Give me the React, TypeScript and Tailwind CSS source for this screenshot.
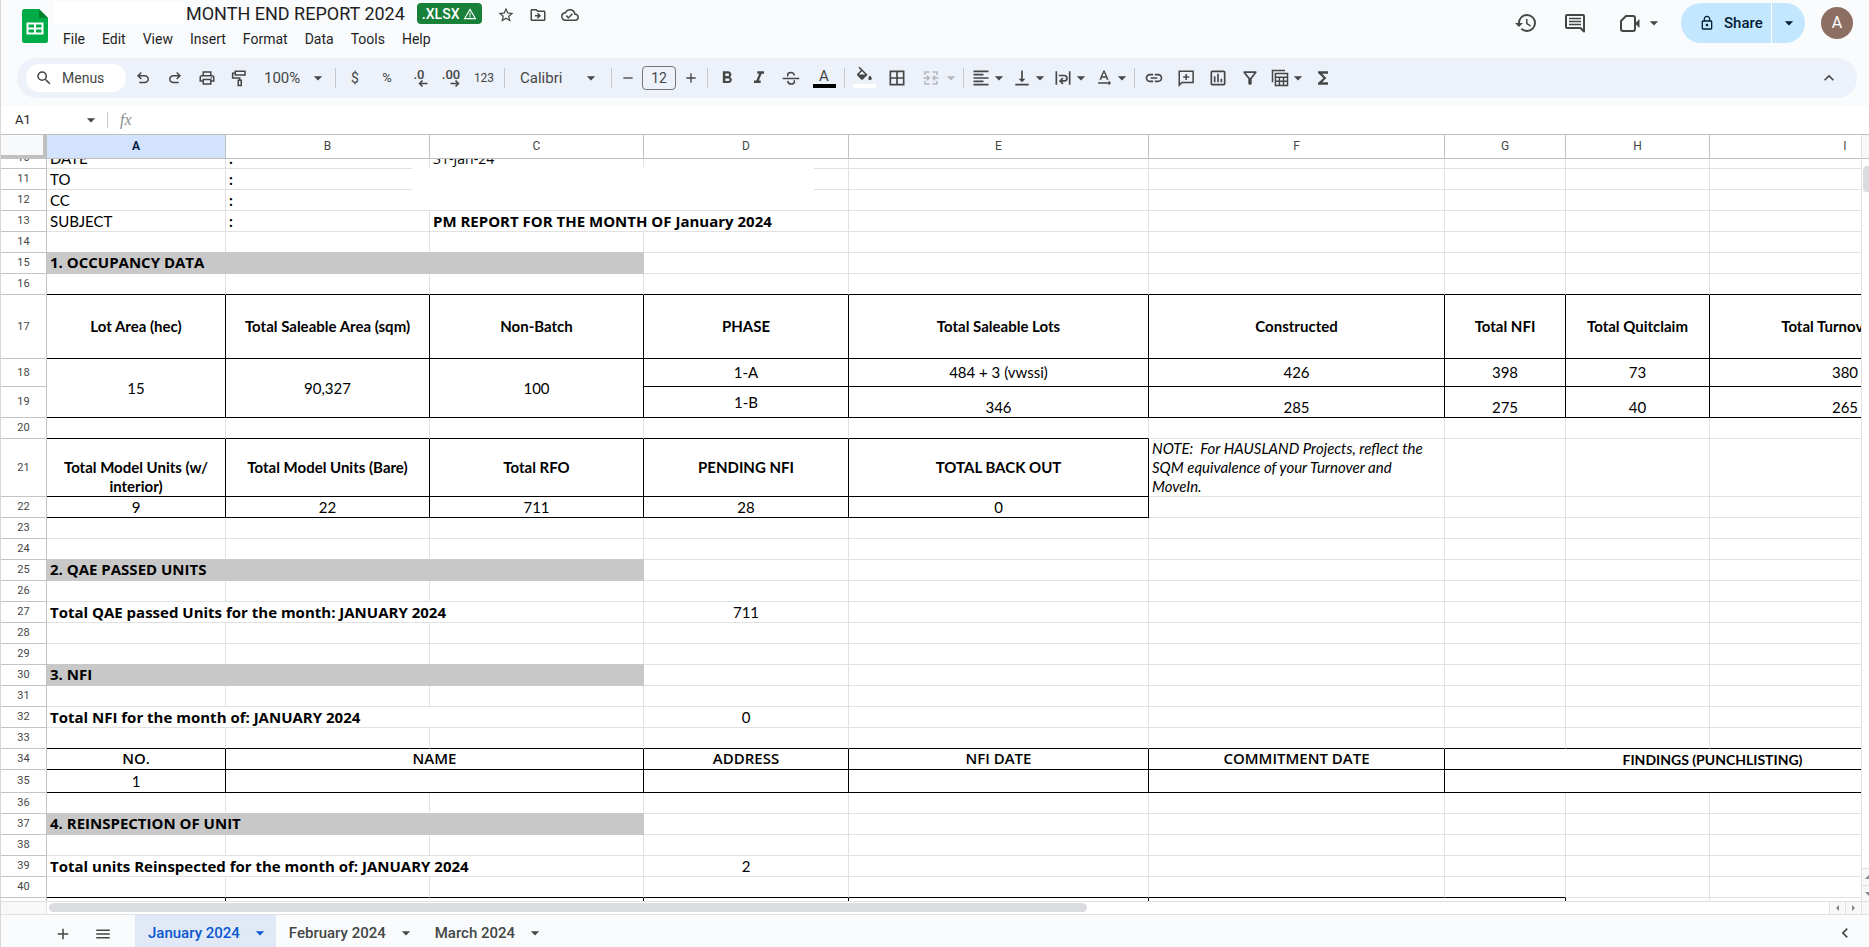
import type { ReactNode } from 'react';
import clsx from 'clsx';
import {
  MdAdd,
  MdArrowDropDown,
  MdBorderAll,
  MdChevronLeft,
  MdFormatAlignLeft,
  MdFormatBold,
  MdFormatItalic,
  MdFunctions,
  MdHistory,
  MdKeyboardArrowUp,
  MdLink,
  MdLockOutline,
  MdMenu,
  MdOutlineCloudDone,
  MdOutlineDriveFileMove,
  MdOutlineFilterAlt,
  MdOutlineInsertChart,
  MdOutlinePrint,
  MdRemove,
  MdSearch,
  MdStarBorder,
  MdTextRotationNone,
  MdVerticalAlignBottom,
  MdWarningAmber,
} from 'react-icons/md';

const menus = ['File', 'Edit', 'View', 'Insert', 'Format', 'Data', 'Tools', 'Help'];

const columns = [
  { id: 'A', width: 'w-[179px]' },
  { id: 'B', width: 'w-[204px]' },
  { id: 'C', width: 'w-[214px]' },
  { id: 'D', width: 'w-[205px]' },
  { id: 'E', width: 'w-[300px]' },
  { id: 'F', width: 'w-[296px]' },
  { id: 'G', width: 'w-[121px]' },
  { id: 'H', width: 'w-[144px]' },
  { id: 'I', width: 'w-[271px]' },
];

type Cell = {
  text?: string;
  span?: number;
  rows?: number;
  style?: string;
};

type Row = {
  n: number;
  height?: string;
  cells?: Record<number, Cell>;
  // how many columns, from A on, get a black right / bottom border
  inkRight?: number;
  inkBottom?: number;
  // columns covered by a merge that started in the row above
  covered?: number;
  greyBottom?: boolean;
};

const label = 'text-[15px]';
const colon = 'text-[15px] font-bold';
const title = 'font-["Open_Sans"] text-[15px] font-bold';
const head = 'text-[15px] font-bold text-center align-middle';
const value = 'text-[15px] text-center';
const middle = 'text-[15px] text-center align-middle';
const section = 'font-["Open_Sans"] text-[15px] font-bold bg-[#c8c8c8] border-[#c8c8c8]! pb-px';
const centred = 'font-["Open_Sans"] text-[15px] font-semibold text-center pb-px';

const rows: Row[] = [
  {
    n: 10,
    height: 'h-[10px]',
    cells: {
      0: { text: 'DATE', style: label },
      1: { text: ':', style: colon },
      2: { text: '31-Jan-24', style: 'font-["Open_Sans"] text-[14px]' },
    },
  },
  { n: 11, cells: { 0: { text: 'TO', style: label }, 1: { text: ':', style: colon } } },
  { n: 12, cells: { 0: { text: 'CC', style: label }, 1: { text: ':', style: colon } } },
  {
    n: 13,
    cells: {
      0: { text: 'SUBJECT', style: label },
      1: { text: ':', style: colon },
      2: { text: 'PM REPORT FOR THE MONTH OF January 2024', span: 2, style: title },
    },
  },
  { n: 14, greyBottom: true },
  { n: 15, cells: { 0: { text: '1. OCCUPANCY DATA', span: 3, style: section } } },
  { n: 16, inkBottom: 9 },
  {
    n: 17,
    height: 'h-16',
    inkRight: 9,
    inkBottom: 9,
    cells: {
      0: { text: 'Lot Area (hec)', style: head },
      1: { text: 'Total Saleable Area (sqm)', style: head },
      2: { text: 'Non-Batch', style: head },
      3: { text: 'PHASE', style: head },
      4: { text: 'Total Saleable Lots', style: head },
      5: { text: 'Constructed', style: head },
      6: { text: 'Total NFI', style: head },
      7: { text: 'Total Quitclaim', style: head },
      8: { text: 'Total Turnover Unit', style: head },
    },
  },
  {
    n: 18,
    height: 'h-7',
    inkRight: 9,
    inkBottom: 9,
    cells: {
      0: { text: '15', rows: 2, style: middle },
      1: { text: '90,327', rows: 2, style: middle },
      2: { text: '100', rows: 2, style: middle },
      3: { text: '1-A', style: middle },
      4: { text: '484 + 3 (vwssi)', style: middle },
      5: { text: '426', style: middle },
      6: { text: '398', style: middle },
      7: { text: '73', style: middle },
      8: { text: '380', style: middle },
    },
  },
  {
    n: 19,
    height: 'h-[31px]',
    covered: 3,
    inkRight: 9,
    inkBottom: 9,
    cells: {
      3: { text: '1-B', style: middle },
      4: { text: '346', style: value },
      5: { text: '285', style: value },
      6: { text: '275', style: value },
      7: { text: '40', style: value },
      8: { text: '265', style: value },
    },
  },
  { n: 20, inkBottom: 5 },
  {
    n: 21,
    height: 'h-[58px]',
    inkRight: 5,
    inkBottom: 5,
    cells: {
      0: { text: 'Total Model Units (w/ interior)', style: 'text-[15px] font-bold text-center' },
      1: { text: 'Total Model Units (Bare)', style: head },
      2: { text: 'Total RFO', style: head },
      3: { text: 'PENDING NFI', style: head },
      4: { text: 'TOTAL BACK OUT', style: head },
      5: {
        text: 'NOTE:  For HAUSLAND Projects, reflect the SQM equivalence of your Turnover and MoveIn.',
        style: 'text-[15px] italic',
      },
    },
  },
  {
    n: 22,
    inkRight: 5,
    inkBottom: 5,
    cells: {
      0: { text: '9', style: value },
      1: { text: '22', style: value },
      2: { text: '711', style: value },
      3: { text: '28', style: value },
      4: { text: '0', style: value },
    },
  },
  { n: 23 },
  { n: 24, greyBottom: true },
  { n: 25, cells: { 0: { text: '2. QAE PASSED UNITS', span: 3, style: section } } },
  { n: 26 },
  {
    n: 27,
    cells: {
      0: { text: 'Total QAE passed Units for the month: JANUARY 2024', span: 3, style: title },
      3: { text: '711', style: value },
    },
  },
  { n: 28 },
  { n: 29, greyBottom: true },
  { n: 30, cells: { 0: { text: '3. NFI', span: 3, style: section } } },
  { n: 31 },
  {
    n: 32,
    cells: {
      0: { text: 'Total NFI for the month of: JANUARY 2024', span: 3, style: title },
      3: { text: '0', style: value },
    },
  },
  { n: 33, inkBottom: 9 },
  {
    n: 34,
    inkRight: 9,
    inkBottom: 9,
    cells: {
      0: { text: 'NO.', style: centred },
      1: { text: 'NAME', span: 2, style: centred },
      3: { text: 'ADDRESS', style: centred },
      4: { text: 'NFI DATE', style: centred },
      5: { text: 'COMMITMENT DATE', style: centred },
      6: { text: 'FINDINGS (PUNCHLISTING)', span: 3, style: 'text-[14px] font-bold text-center' },
    },
  },
  {
    n: 35,
    height: 'h-[23px]',
    inkRight: 9,
    inkBottom: 9,
    cells: { 0: { text: '1', style: middle }, 1: { span: 2 }, 6: { span: 3 } },
  },
  { n: 36, greyBottom: true },
  { n: 37, cells: { 0: { text: '4. REINSPECTION OF UNIT', span: 3, style: section } } },
  { n: 38 },
  {
    n: 39,
    cells: {
      0: { text: 'Total units Reinspected for the month of: JANUARY 2024', span: 3, style: title },
      3: { text: '2', style: value },
    },
  },
  { n: 40, inkBottom: 7 },
  { n: 41, inkRight: 7, cells: { 1: { span: 2 }, 5: { span: 2 } } },
];

const tabs = [
  { name: 'January 2024', active: true },
  { name: 'February 2024', active: false },
  { name: 'March 2024', active: false },
];

function Caret({ className }: { className?: string }) {
  return <MdArrowDropDown className={clsx('h-4 w-4 shrink-0 scale-125', className)} />;
}

function Divider() {
  return <span className="mx-[3px] h-5 w-px shrink-0 bg-[#c7c7c7]" />;
}

function Tool({ name, className, children }: { name: string; className?: string; children: ReactNode }) {
  return (
    <button aria-label={name} className={clsx('flex h-7 shrink-0 items-center justify-center', className || 'w-8')}>
      {children}
    </button>
  );
}

function DropTool({ name, children }: { name: string; children: ReactNode }) {
  return (
    <button aria-label={name} className="flex h-7 w-[41px] shrink-0 items-center pl-1">
      {children}
      <Caret />
    </button>
  );
}

function Stroke({ className, width = 2, children }: { className?: string; width?: number; children: ReactNode }) {
  return (
    <svg viewBox="0 0 24 24" fill="none" stroke="currentColor" strokeWidth={width} className={clsx('shrink-0', className || 'h-[18px] w-[18px]')}>
      {children}
    </svg>
  );
}

const undoPath =
  'M7 19v-2h7.1q1.575 0 2.738-1T18 13.5t-1.162-2.5T14.1 10H7.8l2.6 2.6L9 14 4 9l5-5 1.4 1.4L7.8 8h6.3q2.425 0 4.163 1.575T20 13.5t-1.737 3.925T14.1 19z';

function Header() {
  return (
    <header className="flex h-[58px] items-start pr-4 pl-[21px]">
      <svg viewBox="0 0 26 34" className="mt-[9px] h-[34px] w-[26px] shrink-0">
        <path d="M2.500 0H17l9 9v22.500a2.500 2.500 0 0 1-2.500 2.500h-21A2.500 2.500 0 0 1 0 31.500v-29A2.500 2.500 0 0 1 2.500 0z" fill="#00ac47" />
        <path d="M17 0l9 9h-9z" fill="#00832d" />
        <path d="M4.500 13.500h17v12h-17z" fill="#fff" />
        <path d="M6.500 15.500h5.500v3H6.500zM14 15.500h5.500v3H14zM6.500 20.500h5.500v3H6.500zM14 20.500h5.500v3H14z" fill="#00ac47" />
      </svg>

      <div className="ml-[6px] flex flex-col">
        <div className="flex h-6 items-end">
          <span className="h-[22px] w-[130px] bg-white" />
          <h1 className="ml-0.5 text-lg leading-5 text-[#1f1f1f]">MONTH END REPORT 2024</h1>
          <button className="ml-3 flex h-[21px] items-center gap-1 rounded bg-[#188038] px-[5px] text-sm font-medium text-white">
            .XLSX <MdWarningAmber className="h-[14px] w-[14px]" />
          </button>
          <div className="ml-[13px] flex items-center text-[#444746]">
            <button aria-label="Star" className="w-8 pl-[2px]"><MdStarBorder className="h-[18px] w-[18px]" /></button>
            <button aria-label="Move" className="w-8 pl-[2px]"><MdOutlineDriveFileMove className="h-[18px] w-[18px]" /></button>
            <button aria-label="Document status" className="w-8 pl-[2px]"><MdOutlineCloudDone className="h-[18px] w-[18px]" /></button>
          </div>
        </div>
        <nav className="mt-[5px] flex gap-[17px] pl-[9px] text-sm leading-5 text-[#1f1f1f]">
          {menus.map((m) => (
            <button key={m}>{m}</button>
          ))}
        </nav>
      </div>

      <div className="ml-auto flex h-[46px] items-center text-[#444746]">
        <button aria-label="Version history"><MdHistory className="h-6 w-6" /></button>
        <button aria-label="Comments" className="ml-[25px]">
          <Stroke className="h-6 w-6">
            <path d="M21 20.500V5a1 1 0 0 0-1-1H4a1 1 0 0 0-1 1v11a1 1 0 0 0 1 1h13.500z" strokeLinejoin="round" />
            <path d="M6 7.500h12M6 10.500h12M6 13.500h12" strokeWidth="1.600" />
          </Stroke>
        </button>
        <button aria-label="Join a call" className="ml-[31px] flex items-center gap-1">
          <Stroke className="h-6 w-6">
            <path d="M3 10v8a2 2 0 0 0 2 2h10a2 2 0 0 0 2-2V7a2 2 0 0 0-2-2H8z" strokeLinejoin="round" />
            <path d="M17 12.500l4.500-4.500v9z" fill="currentColor" stroke="none" />
          </Stroke>
          <Caret />
        </button>
        <div className="ml-[19px] flex h-10 overflow-hidden rounded-full bg-[#c2e7ff] text-[#001d35]">
          <button className="flex w-[90px] items-center gap-[9px] pl-[18px] text-[15px] font-medium">
            <MdLockOutline className="h-4 w-4" /> Share
          </button>
          <button aria-label="Share options" className="flex w-[34px] items-center justify-center border-l border-white">
            <Caret />
          </button>
        </div>
        <button aria-label="Account" className="ml-4 h-8 w-8 rounded-full bg-[#8d6e63] text-base text-white">
          A
        </button>
      </div>
    </header>
  );
}

function Toolbar() {
  return (
    <div className="mr-3 mb-2 ml-4 flex h-10 items-center rounded-full bg-[#edf1fa] pl-[9px] text-[#444746]">
      <button className="mr-px flex h-7 w-[100px] shrink-0 items-center gap-[9px] rounded-full bg-white pl-[9px] text-sm">
        <MdSearch className="h-[18px] w-[18px]" /> Menus
      </button>
      <Tool name="Undo">
        <svg viewBox="0 0 24 24" fill="currentColor" className="h-[18px] w-[18px]"><path d={undoPath} /></svg>
      </Tool>
      <Tool name="Redo">
        <svg viewBox="0 0 24 24" fill="currentColor" className="h-[18px] w-[18px] -scale-x-100"><path d={undoPath} /></svg>
      </Tool>
      <Tool name="Print"><MdOutlinePrint className="h-[18px] w-[18px]" /></Tool>
      <Tool name="Paint format">
        <Stroke>
          <path d="M7 3h13v5H7zM7 5.500H3.500V12H13v3M11 15h4v7h-4z" />
        </Stroke>
      </Tool>
      <label className="relative flex w-[77px] shrink-0 items-center">
        <select aria-label="Zoom" className="w-full appearance-none bg-transparent pl-[9px] text-[15px]">
          <option>100%</option>
        </select>
        <Caret className="pointer-events-none absolute right-[6px]" />
      </label>
      <Divider />
      <Tool name="Currency"><span className="text-sm">$</span></Tool>
      <Tool name="Percent"><span className="text-[13px]">%</span></Tool>
      <Tool name="Decrease decimals">
        <span className="flex flex-col items-center text-[13px] leading-[11px] font-medium">
          .0
          <svg viewBox="0 0 10 7" fill="none" stroke="currentColor" strokeWidth="1.500" className="ml-2 h-[7px] w-[10px]"><path d="M9.500 3.500H1.500M4.500.500l-3 3 3 3" /></svg>
        </span>
      </Tool>
      <Tool name="Increase decimals">
        <span className="flex flex-col items-center text-[13px] leading-[11px] font-medium">
          .00
          <svg viewBox="0 0 10 7" fill="none" stroke="currentColor" strokeWidth="1.500" className="ml-2 h-[7px] w-[10px]"><path d="M.500 3.500H8.500M5.500.500l3 3-3 3" /></svg>
        </span>
      </Tool>
      <Tool name="More formats" className="w-[34px]"><span className="text-xs">123</span></Tool>
      <Divider />
      <label className="relative flex w-[100px] shrink-0 items-center">
        <select aria-label="Font" className="w-full appearance-none bg-transparent pl-3 text-[15px]">
          <option>Calibri</option>
        </select>
        <Caret className="pointer-events-none absolute right-[9px]" />
      </label>
      <Divider />
      <Tool name="Decrease font size" className="w-[25px]"><MdRemove className="h-4 w-4" /></Tool>
      <input aria-label="Font size" defaultValue="12" className="mx-0.5 h-6 w-[34px] shrink-0 rounded border border-[#747775] bg-transparent text-center text-sm" />
      <Tool name="Increase font size" className="w-[26px]"><MdAdd className="h-4 w-4" /></Tool>
      <Divider />
      <Tool name="Bold"><MdFormatBold className="h-5 w-5" /></Tool>
      <Tool name="Italic"><MdFormatItalic className="h-5 w-5" /></Tool>
      <Tool name="Strikethrough">
        <Stroke>
          <path d="M1 12.500h22M16.500 8.500C16 6 14.500 4.500 12 4.500S7.500 6 7.500 8c0 .700.100 1.200.400 1.700M7.500 16c.500 2.500 2 4 4.500 4s4.500-1.500 4.500-3.500c0-.600-.100-1-.300-1.500" />
        </Stroke>
      </Tool>
      <Tool name="Text color" className="w-[34px]">
        <span className="flex w-[23px] flex-col items-center border-b-4 border-black text-[15px] leading-4">A</span>
      </Tool>
      <Divider />
      <Tool name="Fill color">
        <svg viewBox="0 0 23 24" fill="currentColor" className="h-6 w-[23px]">
          <path d="M5.500 1.800 6.600.700 14.600 8.700 9.900 13.400a1.200 1.200 0 0 1-1.700 0L4.300 9.500a1.200 1.200 0 0 1 0-1.700L7.900 4.200zM9 5.300 5.700 8.600h6.600z" />
          <path d="M17 9.500s-1.700 1.900-1.700 3a1.700 1.700 0 0 0 3.400 0C18.700 11.400 17 9.500 17 9.500z" />
          <path d="M0 18h23v4H0z" fill="#fff" />
        </svg>
      </Tool>
      <Tool name="Borders" className="w-[34px]"><MdBorderAll className="h-5 w-5" /></Tool>
      <button aria-label="Merge cells" disabled className="flex h-7 w-[46px] shrink-0 items-center gap-[3px] pl-2 text-[#b4b7bc]">
        <Stroke>
          <path d="M4 8V4h6M14 4h6v4M4 16v4h6M14 20h6v-4M2 12h7M22 12h-7M6.500 9l3 3-3 3M17.500 9l-3 3 3 3" />
        </Stroke>
        <Caret />
      </button>
      <Divider />
      <DropTool name="Horizontal align"><MdFormatAlignLeft className="h-5 w-5" /></DropTool>
      <DropTool name="Vertical align"><MdVerticalAlignBottom className="h-5 w-5" /></DropTool>
      <DropTool name="Text wrapping">
        <Stroke className="h-5 w-5">
          <path d="M4 4v16M20 4v16M7 9h6.500a3.200 3.200 0 0 1 0 6.500H9M12 12l-3.500 3.500L12 19" />
        </Stroke>
      </DropTool>
      <DropTool name="Text rotation"><MdTextRotationNone className="h-5 w-5" /></DropTool>
      <Divider />
      <Tool name="Insert link"><MdLink className="h-5 w-5" /></Tool>
      <Tool name="Insert comment">
        <Stroke>
          <path d="M3 21.500V3h18.500v15H6.500zM12.200 6.500v8M8.200 10.500h8" />
        </Stroke>
      </Tool>
      <Tool name="Insert chart"><MdOutlineInsertChart className="h-5 w-5" /></Tool>
      <Tool name="Create filter"><MdOutlineFilterAlt className="h-5 w-5" /></Tool>
      <DropTool name="Table views">
        <Stroke className="h-5 w-5" width={1.8}>
          <path d="M3 17V3h15" />
          <path d="M6.500 6.500H21V21H6.500zM6.500 11H21M6.500 16H21M11.300 11v10M16.200 11v10" />
        </Stroke>
      </DropTool>
      <Tool name="Functions"><MdFunctions className="h-5 w-5" /></Tool>
      <Tool name="Hide the menus" className="mr-3 ml-auto w-8"><MdKeyboardArrowUp className="h-5 w-5" /></Tool>
    </div>
  );
}

function FormulaBar() {
  return (
    <div className="flex h-7 shrink-0 items-center bg-white text-[#444746]">
      <input aria-label="Name box" defaultValue="A1" className="ml-[14px] w-[66px] text-[13px] text-[#1f1f1f] outline-none" />
      <Caret className="ml-[2px]" />
      <span className="ml-2 h-4 w-px bg-[#c7c7c7]" />
      <label htmlFor="formula" className="ml-3 w-6 font-['Liberation_Serif'] text-base text-[#8a8d8c] italic">fx</label>
      <input id="formula" className="flex-1 outline-none" />
    </div>
  );
}

function SheetRow({ row }: { row: Row }) {
  const cells: ReactNode[] = [];
  let col = row.covered || 0;
  while (col < columns.length) {
    const cell = row.cells?.[col] || {};
    const last = col + (cell.span || 1) - 1;
    cells.push(
      <td
        key={col}
        colSpan={cell.span}
        rowSpan={cell.rows}
        className={clsx(
          'overflow-hidden border-r border-b px-[3px] align-bottom whitespace-pre-wrap',
          last < (row.inkRight || 0) ? 'border-r-black' : 'border-r-[#e1e1e1]',
          col < (row.inkBottom || 0) ? 'border-b-black' : row.greyBottom && col < 3 ? 'border-b-[#c8c8c8]' : 'border-b-[#e1e1e1]',
          cell.style,
        )}
      >
        {row.n === 10 && cell.text ? (
          <div className="flex h-[9px] items-end overflow-hidden">{cell.text}</div>
        ) : (
          cell.text
        )}
      </td>,
    );
    col = last + 1;
  }

  return (
    <tr className={row.height || 'h-[21px]'}>
      <th className="border-r border-b border-[#c4c4c4] text-center align-middle font-[Roboto] text-[11px] leading-3 font-normal text-[#444746]">
        {row.n === 10 ? (
          <div className="flex h-[9px] items-end justify-center overflow-hidden leading-5">10</div>
        ) : (
          row.n < 41 && row.n
        )}
      </th>
      {cells}
    </tr>
  );
}

function Sheet() {
  return (
    <div className="flex min-h-0 flex-1 border-t border-[#c0c0c0] bg-white">
      <div className="relative min-w-0 flex-1 overflow-hidden">
        <table className="w-[1980px] table-fixed border-separate border-spacing-0 font-[Lato] leading-[18px] text-black">
          <colgroup>
            <col className="w-[46px]" />
            {columns.map((c) => (
              <col key={c.id} className={c.width} />
            ))}
          </colgroup>
          <thead>
            <tr className="h-6 font-[Roboto] text-xs leading-4 text-[#444746]">
              <td className="border-r-4 border-b-4 border-[#c0c0c0] bg-[#f8f9fa]" />
              {columns.map((c) => (
                <th
                  key={c.id}
                  className={clsx(
                    'border-r border-b border-[#c0c0c0] pb-0.5 text-center',
                    c.id === 'A' ? 'bg-[#d3e3fd] font-bold text-[#041e49]' : 'font-normal',
                  )}
                >
                  {c.id}
                </th>
              ))}
            </tr>
          </thead>
          <tbody className="leading-[19px]">
            {rows.map((row) => (
              <SheetRow key={row.n} row={row} />
            ))}
          </tbody>
        </table>
        {/* blank shape lying over C11:D12 */}
        <div className="absolute top-8 left-[411px] h-[43px] w-[402px] bg-white" />
      </div>

      <div className="flex w-2 shrink-0 flex-col overflow-hidden border-l border-[#e1e1e1]">
        <div className="h-6 border-b border-[#c0c0c0] bg-[#f8f8f8]" />
        <div className="mt-[7px] ml-px h-[26px] w-3 rounded bg-[#dadce0]" />
        <button aria-label="Scroll up" className="mt-auto flex h-[17px] w-4 shrink-0 items-center border-t border-[#e1e1e1] bg-[#f8f8f8] pl-[3px]">
          <svg viewBox="0 0 8 4" className="h-1 w-2" fill="#80868b"><path d="M0 4l4-4 4 4z" /></svg>
        </button>
        <button aria-label="Scroll down" className="flex h-4 w-4 shrink-0 items-center border-t border-[#e1e1e1] bg-[#f8f8f8] pl-[3px]">
          <svg viewBox="0 0 8 4" className="h-1 w-2" fill="#80868b"><path d="M0 0l4 4 4-4z" /></svg>
        </button>
      </div>
    </div>
  );
}

function ScrollRow() {
  return (
    <div className="flex h-[13px] shrink-0 border-t border-[#e1e1e1] bg-white">
      <div className="w-[46px] border-r border-[#e1e1e1] bg-[#f8f8f8]" />
      <div className="flex flex-1 pt-px pl-0.5">
        <div className="h-[9px] w-7/12 rounded-full bg-[#dadce0]" />
      </div>
      <button aria-label="Scroll left" className="flex w-4 items-center justify-center border-l border-[#e1e1e1] bg-[#f8f8f8]">
        <svg viewBox="0 0 3 6" className="h-[6px] w-[3px]" fill="#80868b"><path d="M3 0L0 3l3 3z" /></svg>
      </button>
      <button aria-label="Scroll right" className="flex w-4 items-center justify-center border-l border-[#e1e1e1] bg-[#f8f8f8]">
        <svg viewBox="0 0 3 6" className="h-[6px] w-[3px]" fill="#80868b"><path d="M0 0l3 3-3 3z" /></svg>
      </button>
      <div className="w-2 border-l border-[#e1e1e1] bg-[#f8f8f8]" />
    </div>
  );
}

function SheetTabs() {
  return (
    <div className="flex h-[33px] shrink-0 items-stretch border-t border-[#e1e1e1] bg-[#f9fbfd] text-[15px] text-[#444746]">
      <button aria-label="Add sheet" className="ml-[46px] flex w-8 items-center justify-center pt-[5px]"><MdAdd className="h-[18px] w-[18px]" /></button>
      <button aria-label="All sheets" className="mr-4 ml-2 flex w-8 items-center justify-center pt-[5px]"><MdMenu className="h-[18px] w-[18px]" /></button>
      {tabs.map((tab) => (
        <button
          key={tab.name}
          className={clsx('flex items-center gap-3 pt-1 pr-2 pl-[13px] font-medium', tab.active && 'bg-[#e1e9f7] text-[#0b57d0]')}
        >
          {tab.name}
          <Caret />
        </button>
      ))}
      <button aria-label="Show side panel" className="mr-3.5 ml-auto pt-1"><MdChevronLeft className="h-5 w-5" /></button>
    </div>
  );
}

export default function App() {
  return (
    <div className="flex h-screen flex-col overflow-hidden border-l border-[#d8d8d8] bg-[#f9fbfd] font-[Roboto,sans-serif]">
      <Header />
      <Toolbar />
      <FormulaBar />
      <Sheet />
      <ScrollRow />
      <SheetTabs />
    </div>
  );
}
